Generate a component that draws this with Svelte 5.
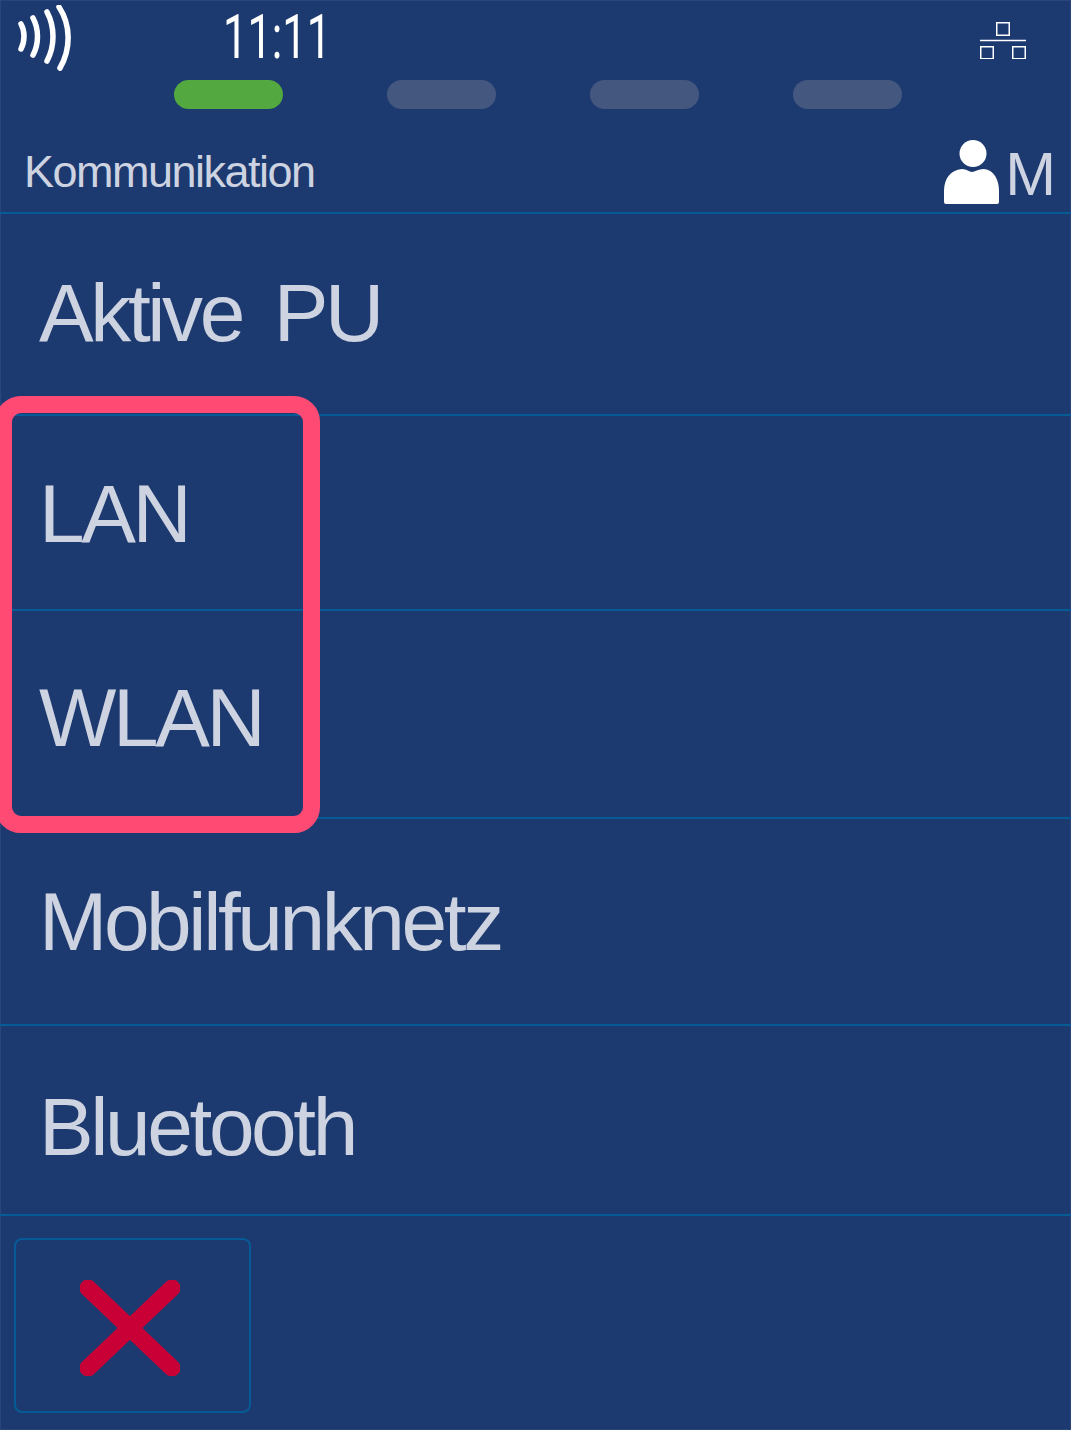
<script lang="ts">
  const menuRows = [
    { label: "Aktive  PU", height: 202, padTop: 0, padBottom: 2 },
    { label: "LAN", height: 195, padTop: 2, padBottom: 0 },
    { label: "WLAN", height: 208, padTop: 8, padBottom: 0 },
    { label: "Mobilfunknetz", height: 207, padTop: 0, padBottom: 0 },
    { label: "Bluetooth", height: 190, padTop: 14, padBottom: 0 }
  ];
  const stepPills = [true, false, false, false];
</script>

<div class="screen">
  <header class="header">
    <div class="status-row">
      <svg class="contactless-icon" viewBox="0 0 60 70" width="60" height="70" aria-hidden="true">
        <path d="M5 19 C9 26 9 36 5 44" />
        <path d="M17 13 C23 24 23 39 17 50" />
        <path d="M31 7 C39 22 39 41 31 56" />
        <path d="M43 2 C55 20 55 44 44 63" />
      </svg>
      <div class="clock">11:11</div>
      <svg class="network-icon" viewBox="0 0 46 38" width="46" height="38" aria-hidden="true">
        <rect x="16.75" y="1.75" width="12.5" height="12.5" />
        <path d="M0 19.5 H46" />
        <rect x="0.75" y="25.75" width="12.5" height="12" />
        <rect x="32.75" y="25.75" width="12.5" height="12" />
      </svg>
    </div>
    <div class="step-row">
      {#each stepPills as isActive}
        <span class="step-pill" class:is-active={isActive}></span>
      {/each}
    </div>
    <div class="title-row">
      <span class="title">Kommunikation</span>
      <div class="user-badge">
        <svg viewBox="0 0 56 64" width="56" height="64" aria-hidden="true">
          <circle cx="29" cy="13.5" r="13.5" />
          <path d="M0 62 V51 C0 39 6 30 18 29 C23 29 25 32 28 32 C31 32 34 29 40 29 C50 30 55 40 55 51 V62 Q55 64 53 64 H2 Q0 64 0 62 Z" />
        </svg>
        <span class="user-letter">M</span>
      </div>
    </div>
  </header>

  <main class="menu">
    {#each menuRows as row}
      <div class="menu-row" style="height: {row.height}px; padding-top: {row.padTop}px; padding-bottom: {row.padBottom}px">{row.label}</div>
    {/each}
    <div class="highlight"></div>
  </main>

  <footer class="footer">
    <button type="button" class="close-button" aria-label="Schließen">
      <svg viewBox="0 0 100 96" width="100" height="96" aria-hidden="true">
        <path d="M8 8 L92 88 M92 8 L8 88" />
      </svg>
    </button>
  </footer>
</div>

<style>
  :global(body) {
    margin: 0;
    background: #1d3a70;
  }

  .screen {
    width: 1071px;
    height: 1430px;
    overflow: hidden;
    background: #1d3a70;
    box-shadow: inset 0 0 0 1px #2a4679;
    color: #cdd3e0;
    font-family: "Liberation Sans", Arial, sans-serif;
  }

  .header {
    height: 214px;
    box-sizing: border-box;
    border-bottom: 2px solid #065a96;
  }

  .status-row {
    display: grid;
    grid-template-columns: 223px auto 1fr;
    height: 80px;
  }

  .contactless-icon {
    margin: 5px 0 0 16px;
    fill: none;
    stroke: #fff;
    stroke-width: 5.5;
    stroke-linecap: round;
  }

  .clock {
    width: 110px;
    margin-top: 1px;
    font-family: Roboto, sans-serif;
    font-size: 62px;
    line-height: 72px;
    color: #fff;
    transform: scaleX(0.7);
    transform-origin: left center;
  }

  .network-icon {
    justify-self: end;
    margin: 21px 45px 0 0;
    fill: none;
    stroke: #fff;
    stroke-width: 1.5;
  }

  .step-row {
    display: flex;
    gap: 94px;
    padding-left: 174px;
  }

  .step-pill {
    width: 109px;
    height: 29px;
    border-radius: 14.5px;
    background: #43577f;
  }

  .step-pill.is-active {
    margin-right: 10px;
    background: #53a83f;
  }

  .title-row {
    display: flex;
    justify-content: space-between;
    align-items: flex-start;
    padding: 28px 15px 0 24px;
  }

  .title {
    font-size: 45px;
    line-height: 60px;
    letter-spacing: -1.5px;
    margin-top: 5px;
  }

  .user-badge {
    display: flex;
    align-items: flex-start;
    gap: 5px;
  }

  .user-badge svg {
    fill: #fff;
    margin-top: 3px;
  }

  .user-letter {
    font-size: 61px;
    line-height: 70px;
    margin-top: 2px;
  }

  .menu {
    position: relative;
  }

  .menu-row {
    display: flex;
    align-items: center;
    box-sizing: border-box;
    padding-left: 39px;
    border-bottom: 2px solid #065a96;
    font-size: 82px;
    letter-spacing: -3.4px;
    word-spacing: -3.5px;
    white-space: pre;
  }

  .highlight {
    position: absolute;
    left: -5px;
    top: 182px;
    width: 325px;
    height: 437px;
    box-sizing: border-box;
    border: 17px solid #ff4a74;
    border-radius: 26px;
  }

  .footer {
    padding: 22px 0 0 14px;
  }

  .close-button {
    display: flex;
    align-items: center;
    justify-content: center;
    box-sizing: border-box;
    width: 237px;
    height: 175px;
    padding: 4px 6px 0 0;
    background: transparent;
    border: 2px solid #065a96;
    border-radius: 8px;
  }

  .close-button svg {
    fill: none;
    stroke: #c80036;
    stroke-width: 17;
    stroke-linecap: round;
  }
</style>
